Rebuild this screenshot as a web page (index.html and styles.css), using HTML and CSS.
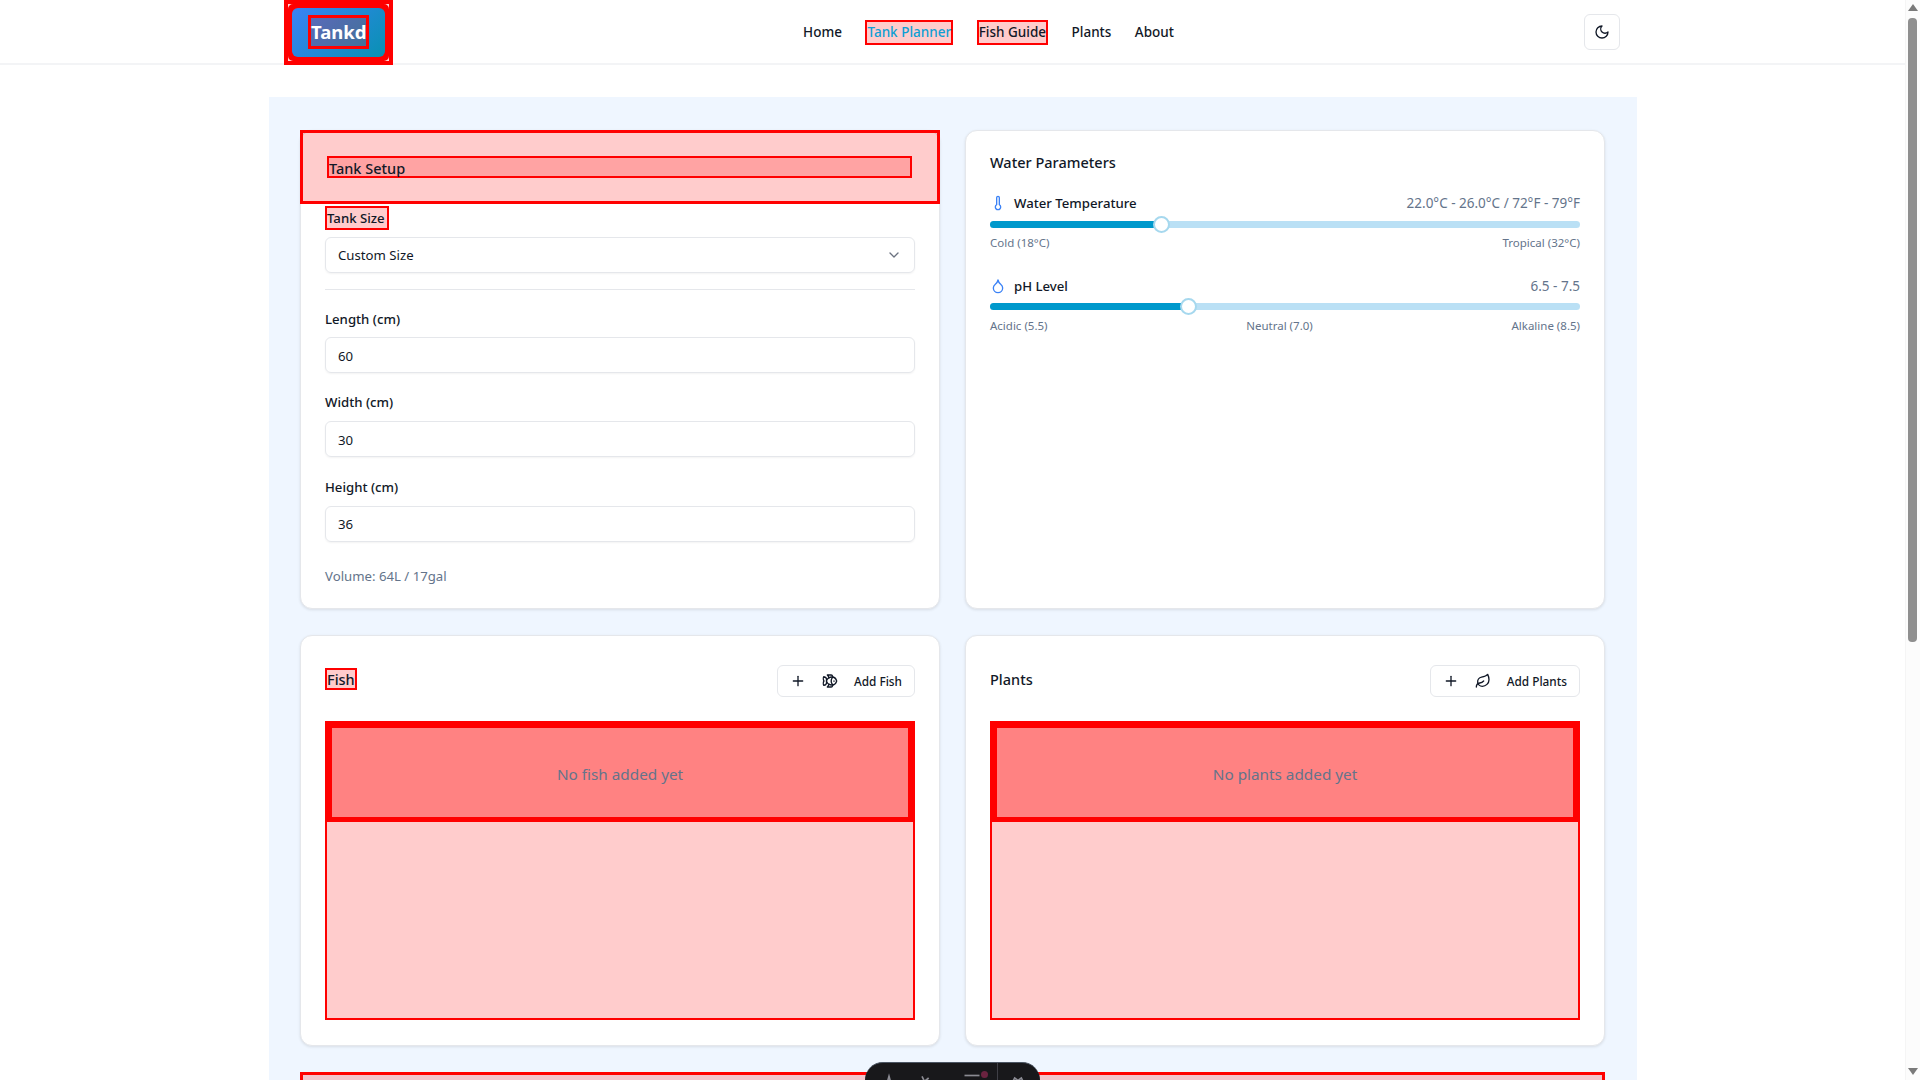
FILE: index.html
```html
<!DOCTYPE html>
<html lang="en">
<head>
    <meta charset="UTF-8">
    <title>Tankd - Tank Planner</title>
    <link rel="stylesheet" href="styles.css">
</head>
<body>
    <header class="site-header">
        <div class="header-inner">
            <a class="logo" href="#">
                <span class="logo-mid">
                    <span class="logo-badge"><span class="logo-text">Tankd</span></span>
                </span>
            </a>
            <nav class="nav">
                <a href="#">Home</a>
                <a href="#" class="marked active">Tank Planner</a>
                <a href="#" class="marked">Fish Guide</a>
                <a href="#">Plants</a>
                <a href="#">About</a>
            </nav>
            <button class="theme-btn" aria-label="Toggle theme">
                <svg class="icon" viewBox="0 0 24 24"><path d="M12 3a6 6 0 0 0 9 9 9 9 0 1 1-9-9Z"/></svg>
            </button>
        </div>
    </header>

    <main class="planner">
        <section class="card setup-card">
            <div class="setup-head"><h2 class="setup-title">Tank Setup</h2></div>
            <div class="setup-body">
                <label class="size-label">Tank Size</label>
                <div class="select-box">
                    <span>Custom Size</span>
                    <svg class="icon chevron" viewBox="0 0 24 24"><path d="m6 9 6 6 6-6"/></svg>
                </div>
                <hr class="divider">
                <div class="field">
                    <label>Length (cm)</label>
                    <div class="input-box">60</div>
                </div>
                <div class="field">
                    <label>Width (cm)</label>
                    <div class="input-box">30</div>
                </div>
                <div class="field">
                    <label>Height (cm)</label>
                    <div class="input-box">36</div>
                </div>
                <p class="volume">Volume: 64L / 17gal</p>
            </div>
        </section>

        <section class="card water-card">
            <h2 class="card-title">Water Parameters</h2>
            <div class="param">
                <div class="param-head">
                    <span class="param-name">
                        <svg class="icon blue" viewBox="0 0 24 24"><path d="M14 4v10.54a4 4 0 1 1-4 0V4a2 2 0 0 1 4 0Z"/></svg>
                        Water Temperature
                    </span>
                    <span class="param-value">22.0°C - 26.0°C / 72°F - 79°F</span>
                </div>
                <div class="slider slider-temp"><div class="slider-fill" style="width: 29.2%"><span class="slider-thumb"></span></div></div>
                <div class="slider-labels labels-temp"><span>Cold (18°C)</span><span>Tropical (32°C)</span></div>
            </div>
            <div class="param">
                <div class="param-head">
                    <span class="param-name">
                        <svg class="icon blue" viewBox="0 0 24 24"><path d="M12 22a7 7 0 0 0 7-7c0-2-1-3.9-3-5.5s-3.5-4-4-6.5c-.5 2.5-2 4.9-4 6.5C6 11.1 5 13 5 15a7 7 0 0 0 7 7z"/></svg>
                        pH Level
                    </span>
                    <span class="param-value">6.5 - 7.5</span>
                </div>
                <div class="slider"><div class="slider-fill" style="width: 33.7%"><span class="slider-thumb"></span></div></div>
                <div class="slider-labels"><span>Acidic (5.5)</span><span>Neutral (7.0)</span><span>Alkaline (8.5)</span></div>
            </div>
        </section>

        <section class="card list-card">
            <div class="list-head">
                <h2 class="card-title fish-title">Fish</h2>
                <button class="add-btn">
                    <svg class="icon" viewBox="0 0 24 24"><path d="M5 12h14"/><path d="M12 5v14"/></svg>
                    <svg class="icon" viewBox="0 0 24 24"><path d="M6.5 12c.94-3.46 4.94-6 8.5-6 3.56 0 6.06 2.54 7 6-.94 3.47-3.44 6-7 6s-7.56-2.53-8.5-6Z"/><path d="M18 12v.5"/><path d="M16 17.93a9.77 9.77 0 0 1 0-11.86"/><path d="M7 10.67C7 8 5.58 5.97 2.73 5.5c-1 1.5-1 5 .23 6.5-1.24 1.5-1.24 5-.23 6.5C5.58 18.03 7 16 7 13.33"/><path d="M10.46 7.26C10.2 5.88 9.17 4.24 8 3h5.8a2 2 0 0 1 1.98 1.67l.23 1.4"/><path d="m16.01 17.93-.23 1.4A2 2 0 0 1 13.8 21H8c1.17-1.24 2.2-2.88 2.46-4.26"/></svg>
                    <span>Add Fish</span>
                </button>
            </div>
            <div class="drop-zone">
                <div class="drop-mid"><div class="drop-empty">No fish added yet</div></div>
            </div>
        </section>

        <section class="card list-card">
            <div class="list-head">
                <h2 class="card-title">Plants</h2>
                <button class="add-btn">
                    <svg class="icon" viewBox="0 0 24 24"><path d="M5 12h14"/><path d="M12 5v14"/></svg>
                    <svg class="icon" viewBox="0 0 24 24"><path d="M11 20A7 7 0 0 1 9.8 6.1C15.5 5 17 4.48 19 2c1 2 2 4.18 2 8 0 5.5-4.78 10-10 10Z"/><path d="M2 21c0-3 1.85-5.36 5.08-6C9.5 14.52 12 13 13 12"/></svg>
                    <span>Add Plants</span>
                </button>
            </div>
            <div class="drop-zone">
                <div class="drop-mid"><div class="drop-empty">No plants added yet</div></div>
            </div>
        </section>

        <section class="next-block"></section>
    </main>

    <div class="dev-toolbar">
        <svg class="tool-icon" viewBox="0 0 24 24"><path d="M7 22 12 4l5 18"/></svg>
        <svg class="tool-icon tool-second" viewBox="0 0 24 24"><path d="m6 4 4 8 8 4"/><path d="M4 14 14 6"/></svg>
        <span class="tool-menu"><svg class="tool-icon" viewBox="0 0 24 24"><path d="M3 3h18"/><path d="M3 11h18"/></svg><i class="tool-dot"></i></span>
        <span class="tool-sep"></span>
        <svg class="tool-icon" viewBox="0 0 24 24"><path d="m4 14 4-8 4 3 4-3 4 8v8H4Z"/></svg>
    </div>

    <div class="fake-scrollbar">
        <span class="arrow-up"></span>
        <span class="thumb"></span>
        <span class="arrow-down"></span>
    </div>
</body>
</html>
```

FILE: styles.css
```css
*{
    padding: 0;
    margin: 0;
    box-sizing: border-box;
}
html, body{
    height: 100%;
    overflow: hidden;
}
body{
    width: 1905px;
    background-color: #ffffff;
    color: #111827;
    font-family: "Noto Sans", "Open Sans", sans-serif;
    font-size: 13.2px;
    line-height: 20px;
}
a{
    color: inherit;
    text-decoration: none;
}
.icon{
    width: 16px;
    height: 16px;
    fill: none;
    stroke: currentColor;
    stroke-width: 2;
    stroke-linecap: round;
    stroke-linejoin: round;
    flex-shrink: 0;
}
.icon.blue{
    color: #3b82f6;
}

/* header */
.site-header{
    height: 65px;
    border-bottom: 2px solid #f3f4f6;
}
.header-inner{
    width: 1337px;
    height: 64px;
    margin: 0 auto;
    display: flex;
    align-items: center;
    justify-content: space-between;
}
.logo{
    display: block;
    width: 109px;
    height: 65px;
    border: 4px solid #ff0000;
    background-color: #ffd6d6;
}
.logo-mid{
    display: block;
    height: 100%;
    border: 4px solid #ff0000;
    border-radius: 5px;
    background-color: #ff0000;
}
.logo-badge{
    display: flex;
    align-items: center;
    justify-content: center;
    height: 100%;
    border-radius: 6px;
    background: linear-gradient(135deg, #3b82f6, #0891b2);
}
.logo-text{
    display: block;
    width: 61px;
    height: 34px;
    border: 3px solid #ff0000;
    background-color: rgba(255,0,0,0.2);
    color: #ffffff;
    font-size: 18.5px;
    font-weight: 700;
    line-height: 27px;
    text-align: center;
}
.nav{
    display: flex;
    align-items: center;
    gap: 23.5px;
    font-size: 13.5px;
    font-weight: 500;
}
.nav a.marked{
    height: 25px;
    border: 2px solid #ff0000;
    background-color: rgba(255,0,0,0.2);
    line-height: 21px;
}
.nav a.active{
    color: #0e9fd4;
}
.theme-btn{
    display: flex;
    align-items: center;
    justify-content: center;
    width: 36px;
    height: 36px;
    margin-right: 1px;
    border: 1px solid #e5e7eb;
    border-radius: 6px;
    background-color: #ffffff;
    color: #111827;
}

/* main layout */
.planner{
    width: 1368px;
    margin: 32px auto 0;
    padding: 33px 31.5px;
    background-color: #eff6ff;
    display: grid;
    grid-template-columns: 1fr 1fr;
    grid-template-rows: 479px 411px;
    gap: 26px 25px;
}
.card{
    background-color: #ffffff;
    border: 1px solid #e5e7eb;
    border-radius: 12px;
    box-shadow: 0 1px 3px rgba(0,0,0,0.1);
}
.card-title{
    font-size: 14.5px;
    font-weight: 500;
    line-height: 24px;
}

/* tank setup */
.setup-head{
    height: 74px;
    margin: -1px -1px 0;
    padding: 23px 25px 0 24px;
    border: 3px solid #ff0000;
    background-color: rgba(255,0,0,0.2);
}
.setup-title{
    height: 22px;
    border: 2px solid #ff0000;
    background-color: rgba(255,0,0,0.2);
    font-size: 14.5px;
    font-weight: 500;
    line-height: 20px;
}
.setup-body{
    padding: 2px 24px 0;
}
.size-label{
    display: block;
    width: 64px;
    height: 24px;
    border: 2px solid #ff0000;
    background-color: rgba(255,0,0,0.2);
    font-weight: 500;
    line-height: 20px;
    white-space: nowrap;
}
.select-box, .input-box{
    height: 36px;
    padding: 0 12px;
    border: 1px solid #e5e7eb;
    border-radius: 6px;
    box-shadow: 0 1px 2px rgba(0,0,0,0.05);
    display: flex;
    align-items: center;
    justify-content: space-between;
    line-height: 34px;
}
.input-box{
    padding-top: 1px;
}
.select-box{
    margin-top: 7px;
}
.chevron{
    color: #6b7280;
}
.divider{
    margin: 16px 0 19px;
    border: 0;
    border-top: 1px solid #e5e7eb;
}
.field{
    margin-bottom: 19.4px;
}
.field label{
    display: block;
    margin-bottom: 8px;
    font-weight: 500;
}
.field + .field label{
    margin-bottom: 9px;
}
.volume{
    margin-top: 24px;
    color: #64748b;
}

/* water parameters */
.water-card{
    padding: 19px 24px;
}
.param{
    margin-top: 19px;
}
.param + .param{
    margin-top: 25px;
}
.param-head{
    display: flex;
    align-items: center;
    justify-content: space-between;
}
.param-name{
    display: flex;
    align-items: center;
    gap: 8px;
    font-weight: 500;
}
.param-value{
    color: #64748b;
    font-size: 13.5px;
}
.slider{
    height: 7px;
    margin-top: 7px;
    border-radius: 4px;
    background-color: #bae0f5;
}
.slider-temp{
    margin-top: 8px;
}
.slider-fill{
    position: relative;
    height: 100%;
    border-radius: 4px 0 0 4px;
    background-color: #0099cc;
}
.slider-thumb{
    position: absolute;
    right: -8px;
    top: -5px;
    width: 17px;
    height: 17px;
    border: 2px solid #a6d8ee;
    border-radius: 50%;
    background-color: #ffffff;
}
.slider-labels{
    display: flex;
    justify-content: space-between;
    margin-top: 8px;
    color: #64748b;
    font-size: 11.5px;
    line-height: 16px;
}
.labels-temp{
    margin-top: 7px;
}

/* fish and plants */
.list-card{
    padding: 29px 24px 0;
}
.list-head{
    display: flex;
    align-items: flex-start;
    justify-content: space-between;
}
.fish-title{
    height: 22px;
    border: 2px solid #ff0000;
    background-color: rgba(255,0,0,0.2);
    line-height: 18px;
    margin-top: 3px;
}
.list-head .card-title:not(.fish-title){
    margin-top: 2px;
}
.add-btn{
    display: flex;
    align-items: center;
    gap: 16px;
    height: 32px;
    padding: 0 12px;
    border: 1px solid #e5e7eb;
    border-radius: 6px;
    background-color: #ffffff;
    color: #111827;
    font-family: inherit;
    font-size: 11.8px;
    font-weight: 500;
}
.drop-zone{
    height: 299px;
    margin-top: 24px;
    border: 2px solid #ff0000;
    background-color: rgba(255,0,0,0.2);
}
.drop-mid{
    height: 99px;
    border: 2px solid #ff0000;
    background-color: rgba(255,0,0,0.2);
}
.drop-empty{
    height: 100%;
    padding-top: 2px;
    border: 3px solid #ff0000;
    background-color: rgba(255,0,0,0.2);
    color: #64748b;
    font-size: 15.3px;
    display: flex;
    align-items: center;
    justify-content: center;
}
.next-block{
    grid-column: 1 / 3;
    height: 300px;
    border: 3px solid #ff0000;
    background-color: rgba(255,0,0,0.2);
}

/* dev toolbar */
.dev-toolbar{
    position: fixed;
    left: 865px;
    bottom: -24px;
    width: 175px;
    height: 42px;
    border-top: 1px solid #4b5563;
    border-radius: 18px;
    background-color: #18181b;
    display: flex;
    align-items: flex-start;
    gap: 10px;
    padding: 10px 0 0 14px;
}
.tool-icon{
    width: 20px;
    height: 20px;
    fill: none;
    stroke: #8b8b93;
    stroke-width: 2;
}
.tool-second{
    margin-left: 8px;
}
.tool-menu{
    position: relative;
    display: block;
    height: 20px;
    margin-left: 15px;
}
.tool-dot{
    position: absolute;
    right: -6px;
    top: -2px;
    width: 7px;
    height: 7px;
    border-radius: 50%;
    background-color: #6b2340;
}
.tool-sep{
    width: 1px;
    height: 30px;
    margin-top: -10px;
    margin-left: 5px;
    background-color: #3f3f46;
}

/* scrollbar drawn over the page */
.fake-scrollbar{
    position: fixed;
    right: 0;
    top: 0;
    width: 15px;
    height: 100%;
    background-color: #fcfcfc;
    border-left: 1px solid #f5f5f5;
}
.thumb{
    position: absolute;
    left: 2px;
    top: 18px;
    width: 9px;
    height: 624px;
    border-radius: 4px;
    background-color: #8f8f8f;
}
.arrow-up, .arrow-down{
    position: absolute;
    left: 2px;
    width: 0;
    height: 0;
    border-left: 5px solid transparent;
    border-right: 5px solid transparent;
}
.arrow-up{
    top: 4px;
    border-bottom: 7px solid #7a7a7a;
}
.arrow-down{
    bottom: 5px;
    border-top: 7px solid #7a7a7a;
}
```
